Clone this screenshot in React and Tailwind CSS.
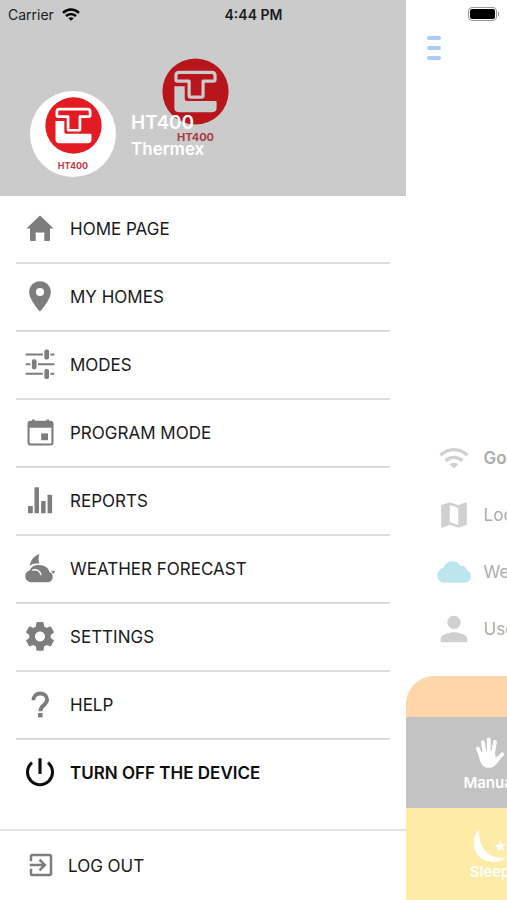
import React from "react";
import { MdExitToApp, MdMap, MdPerson } from "react-icons/md";

function Icon({ children, className = "h-8 w-8", viewBox = "0 0 32 32" }) {
  return (
    <svg viewBox={viewBox} className={`shrink-0 ${className}`} fill="currentColor" aria-hidden="true">
      {children}
    </svg>
  );
}

const HomeIcon = () => (
  <Icon>
    <path d="M16 2.6 29.6 15.6H26V27a1 1 0 0 1-1 1h-4.7v-8.6h-8.6V28H7a1 1 0 0 1-1-1V15.6H2.4Z" />
  </Icon>
);

const PinIcon = () => (
  <Icon>
    <path
      fillRule="evenodd"
      d="M16 0.3C10 0.3 5.2 5 5.2 11c0 8 10.8 19.6 10.8 19.6S26.8 19 26.8 11C26.8 5 22 .3 16 .3Zm0 14.7a4 4 0 1 1 0-8 4 4 0 0 1 0 8Z"
    />
  </Icon>
);

const SlidersIcon = () => (
  <Icon>
    <path d="M1.7 4.5h17.2v2H1.7zM26.4 4.5h4v2h-4zM1.7 14.2h4.8v2H1.7zM14 14.2h16.4v2H14zM1.7 23.8h17.2v2H1.7zM26.4 23.8h4v2h-4z" />
    <rect x="20.4" y="0.4" width="4.6" height="10" rx="1.6" />
    <rect x="7.9" y="10.2" width="4.6" height="10" rx="1.6" />
    <rect x="20.4" y="19.9" width="4.6" height="10" rx="1.6" />
  </Icon>
);

const CalendarIcon = () => (
  <Icon>
    <path
      fillRule="evenodd"
      d="M8 2.4h2.6v1.4h11.8V2.4H25v1.4h1.5a3 3 0 0 1 3 3v18.7a3 3 0 0 1-3 3h-20a3 3 0 0 1-3-3V6.8a3 3 0 0 1 3-3H8ZM5.600 10.700v14.700a1 1 0 0 0 1 1h19.800a1 1 0 0 0 1-1V10.700Z"
    />
    <rect x="17.2" y="16.4" width="6.8" height="6.8" />
  </Icon>
);

const BarsIcon = () => (
  <Icon>
    <rect x="4" y="21" width="4.8" height="7.3" rx=".6" />
    <rect x="10.5" y="2.3" width="4.5" height="26" rx=".6" />
    <rect x="17.1" y="16" width="4.5" height="12.3" rx=".6" />
    <rect x="23.6" y="9.7" width="4.5" height="18.6" rx=".6" />
  </Icon>
);

const WeatherIcon = () => (
  <Icon>
    <path d="M15.4 1.300C10.500 2.500 7 6.300 5.800 13c2.200-2.300 5-2.900 9.600-2.400C14.300 7.500 14.300 4.500 15.400 1.300Z" />
    <path d="M8 29.300c-4 0-6.700-2.700-6.700-6.100 0-3 2-5.300 4.700-5.900 1-3.400 4.400-5.300 8.600-5.300 6.200 0 10.100 3 10.800 7 2 .8 3.300 2.400 3.300 4.700 0 3.200-2.400 5.600-5.500 5.600Z" />
    <path
      d="M8.300 17.200c4.200-1.500 7.600.4 8.700 4.800"
      fill="none"
      className="stroke-white"
      strokeWidth="1.500"
    />
    <path d="m27 17.700 4 .2-1.700 3.400Z" />
  </Icon>
);

const GearIcon = () => (
  <Icon>
    <g transform="translate(16 15.4) scale(1.43) translate(-12 -12)">
      <path d="M19.43 12.98c.04-.32.07-.64.07-.98s-.03-.66-.07-.98l2.11-1.650c.19-.15.24-.42.12-.64l-2-3.460c-.12-.22-.39-.3-.61-.22l-2.490 1c-.52-.4-1.080-.73-1.690-.98l-.38-2.650C14.460 2.180 14.250 2 14 2h-4c-.25 0-.46.18-.49.42l-.38 2.650c-.61.25-1.170.59-1.690.98l-2.490-1c-.23-.09-.49 0-.61.22l-2 3.460c-.13.22-.07.49.12.64l2.110 1.650c-.04.32-.07.65-.07.98s.03.66.07.98l-2.110 1.650c-.19.15-.24.42-.12.64l2 3.460c.12.22.39.3.61.22l2.490-1c.52.4 1.080.73 1.690.98l.38 2.650c.03.24.24.42.49.42h4c.25 0 .46-.18.49-.42l.38-2.650c.61-.25 1.170-.59 1.690-.98l2.490 1c.23.09.49 0 .61-.22l2-3.460c.12-.22.07-.49-.12-.64l-2.110-1.650zM12 15.500c-1.930 0-3.500-1.570-3.500-3.500s1.570-3.500 3.500-3.500 3.500 1.570 3.500 3.500-1.570 3.500-3.500 3.500z" />
    </g>
  </Icon>
);

const QuestionIcon = () => (
  <Icon>
    <path
      d="M9.400 11.200c0-4 3-6.700 6.800-6.700s6.900 2.500 6.900 6.200c0 5.100-6.700 5.600-6.700 11.500"
      fill="none"
      stroke="currentColor"
      strokeWidth="3.800"
    />
    <rect x="14" y="24" width="4.6" height="4.400" />
  </Icon>
);

const PowerIcon = () => (
  <Icon>
    <path d="M16 1.300v15.600" stroke="currentColor" strokeWidth="3.200" />
    <path d="M8 5.600a12.500 12.500 0 1 0 16 0" fill="none" stroke="currentColor" strokeWidth="3" />
  </Icon>
);

function WifiIcon({ className, strokeWidth = 3.4 }) {
  return (
    <Icon className={className} viewBox="0 0 30 22">
      <g fill="none" stroke="currentColor" strokeWidth={strokeWidth}>
        <path d="M1.500 8.300C9.500.700 20.500.700 28.500 8.300" />
        <path d="M6.500 13.600c5-4.300 12-4.300 17 0" />
      </g>
      <path d="M10.600 17.300c2.600-2.200 6.200-2.200 8.800 0L15 21.600Z" />
    </Icon>
  );
}

const CloudIcon = () => (
  <Icon className="h-[22px] w-[34px] text-[#bce5ee]" viewBox="0 0 34 22">
    <path d="M8 21.800C3.500 21.800.3 18.800.3 14.700c0-3.600 2.200-6.800 6.200-7.900C8 2.700 11 .3 15 .3c4 0 6.700 1.700 8.400 4.600 3.300-.8 6 1 6.300 4.300 2.600.9 4.200 3.200 4.200 6 0 3.900-2.600 6.600-6.200 6.600Z" />
  </Icon>
);

const HandIcon = () => (
  <Icon>
    <g fill="none" stroke="currentColor" strokeLinecap="round" strokeWidth="3.800">
      <path d="M3.900 11.500 7.500 21" />
      <path d="M8.800 5 11 18" />
      <path d="M14.800 2.300v15" />
      <path d="M21 4.800 18.700 18" />
      <path d="M28.300 17.300 21.500 24" />
    </g>
    <path d="M4.800 16.500 9.500 14h11.300l.9 6.500 2.600-1.500 1.900 3.400-4.200 5c-3.200 4.300-10.300 4.600-13.700.9C6.200 25.900 5.500 21.500 4.800 16.500Z" />
  </Icon>
);

const MoonIcon = () => (
  <Icon className="h-9 w-9" viewBox="0 0 36 36">
    <path d="M7.300 1C-.3 9 .100 21.500 6.500 28c8 8 20.500 7.300 28 1.500-8 1-15.500-.3-20.500-6C8.500 17.500 6.500 10 7.300 1Z" />
    <path d="m28.300 12.200 1.500 3.900 4.200.2-3.200 2.700 1.600 3.900-3.700-2-3 3.100.5-4.300-3.900-1.900 4.300-1.200Z" />
  </Icon>
);

function BrandMark({ className }) {
  return (
    <svg viewBox="76 55 168 168" className={`shrink-0 ${className}`} aria-hidden="true">
      <circle cx="160" cy="139" r="83" fill="currentColor" />
      <path
        className="fill-none stroke-(--mark)"
        strokeWidth="8"
        strokeLinejoin="round"
        d="M119 91h82q8 0 8 8v10q0 4-4 4h-26v36q0 4-4 4h-27q-4 0-4-4v-36h-29q-4 0-4-4V99q0-8 8-8Z"
      />
      <path
        className="fill-(--mark)"
        d="M107 126h26v32q0 5 5 5h72q3 0 3 3v14q0 11-11 11h-84q-11 0-11-11Z"
      />
    </svg>
  );
}

const items = [
  ["HOME PAGE", HomeIcon],
  ["MY HOMES", PinIcon],
  ["MODES", SlidersIcon],
  ["PROGRAM MODE", CalendarIcon],
  ["REPORTS", BarsIcon],
  ["WEATHER FORECAST", WeatherIcon],
  ["SETTINGS", GearIcon],
  ["HELP", QuestionIcon],
];

function StatusBar() {
  return (
    <div className="absolute inset-x-0 top-0 z-10 grid h-7 grid-cols-3 items-center px-2 text-[14px] text-[#1c1c1c]">
      <div className="flex items-center gap-2">
        <span>Carrier</span>
        <WifiIcon className="h-[13px] w-[18px] text-black" strokeWidth={4.2} />
      </div>
      <span className="text-center font-semibold">4:44 PM</span>
      <div className="flex items-center justify-end gap-px">
        <span className="h-[14px] w-[29px] rounded-[4px] border border-[#999] p-px">
          <span className="block h-full w-full rounded-[2px] bg-black" />
        </span>
        <span className="h-1 w-px bg-[#999]" />
      </div>
    </div>
  );
}

function Drawer() {
  return (
    <aside className="flex w-4/5 shrink-0 flex-col bg-white">
      <header className="relative flex h-[196px] items-end gap-[15px] bg-[#cbcbcb] pb-[19px] pl-[30px]">
        <div className="absolute top-[58px] left-[162px] flex flex-col items-center text-[#b9151c] [--mark:#cbcbcb]">
          <BrandMark className="h-[67px] w-[67px]" />
          <span className="mt-1 text-[11px] leading-4 font-bold text-[#a93c44]">HT400</span>
        </div>
        <div className="flex h-[86px] w-[86px] flex-col items-center rounded-full bg-white pt-[6px] text-[#e31b22] [--mark:#fff]">
          <BrandMark className="h-[57px] w-[57px]" />
          <span className="mt-1 text-[9px] leading-4 font-bold text-[#c93a40]">HT400</span>
        </div>
        <div className="relative pb-4 font-semibold text-white">
          <h1 className="text-[19px] leading-7">HT400</h1>
          <p className="text-[17px] leading-6">Thermex</p>
        </div>
      </header>

      <nav className="flex flex-col px-4">
        {items.map(([label, Glyph]) => (
          <button
            key={label}
            type="button"
            className="flex h-[68px] items-center gap-[14px] border-b-2 border-[#dedede] pl-2 text-left text-[17px] text-[#1a1a1a]"
          >
            <span className="text-[#7d7d7d]">
              <Glyph />
            </span>
            <span className="pt-[2px]">{label}</span>
          </button>
        ))}
        <button
          type="button"
          className="flex h-[66px] items-center gap-[14px] pl-2 text-left text-[17px] font-semibold text-[#0d0d0d]"
        >
          <PowerIcon />
          <span className="pt-[2px]">TURN OFF THE DEVICE</span>
        </button>
      </nav>

      <button
        type="button"
        className="mt-auto flex h-[71px] items-center gap-3 border-t-2 border-[#e2e2e2] pl-[26px] text-left text-[17px] text-[#1a1a1a]"
      >
        <MdExitToApp className="mb-[2px] h-[30px] w-[30px] text-[#7d7d7d]" />
        <span className="pt-[2px]">LOG OUT</span>
      </button>
    </aside>
  );
}

function InfoRow({ icon, label, className = "" }) {
  return (
    <li className={`flex h-[57px] items-center gap-3 pl-[30px] ${className}`}>
      <span className="flex w-9 shrink-0 justify-center">{icon}</span>
      <span className="pt-[2px]">{label}</span>
    </li>
  );
}

function HomeScreen() {
  return (
    <main className="flex min-w-0 flex-1 flex-col overflow-hidden bg-white whitespace-nowrap">
      <button type="button" aria-label="Menu" className="mt-9 ml-[21px] flex w-[14px] flex-col gap-[6px]">
        <span className="h-1 w-full rounded-full bg-[#adcbfa]" />
        <span className="h-1 w-full rounded-full bg-[#adcbfa]" />
        <span className="h-1 w-full rounded-full bg-[#adcbfa]" />
      </button>

      <ul className="mt-auto mb-[19px] text-[17px] text-[#acacac]">
        <InfoRow
          className="font-semibold"
          icon={<WifiIcon className="h-[22px] w-[30px] text-[#d0d0d0]" />}
          label="Good"
        />
        <InfoRow icon={<MdMap className="h-[34px] w-[34px] text-[#d0d0d0]" />} label="Location" />
        <InfoRow icon={<CloudIcon />} label="Weather" />
        <InfoRow icon={<MdPerson className="h-10 w-10 shrink-0 text-[#d0d0d0]" />} label="User" />
      </ul>

      <section className="w-[507px] overflow-hidden rounded-tl-[28px] text-[15px] font-semibold text-white">
        <div className="h-[41px] bg-[#fed6a9]" />
        <div className="bg-[#c3c3c3]">
          <button type="button" className="flex h-[91px] w-1/3 flex-col items-center pt-5">
            <HandIcon />
            <span className="mt-1 leading-5">Manual</span>
          </button>
        </div>
        <div className="bg-[#feeba6]">
          <button type="button" className="flex h-[92px] w-1/3 flex-col items-center pt-5">
            <MoonIcon />
            <span className="-mt-0.5 leading-5">Sleep</span>
          </button>
        </div>
      </section>
    </main>
  );
}

export default function App() {
  return (
    <div className="relative flex min-h-screen overflow-hidden bg-white font-['Inter','Liberation_Sans',sans-serif]">
      <StatusBar />
      <Drawer />
      <HomeScreen />
    </div>
  );
}
